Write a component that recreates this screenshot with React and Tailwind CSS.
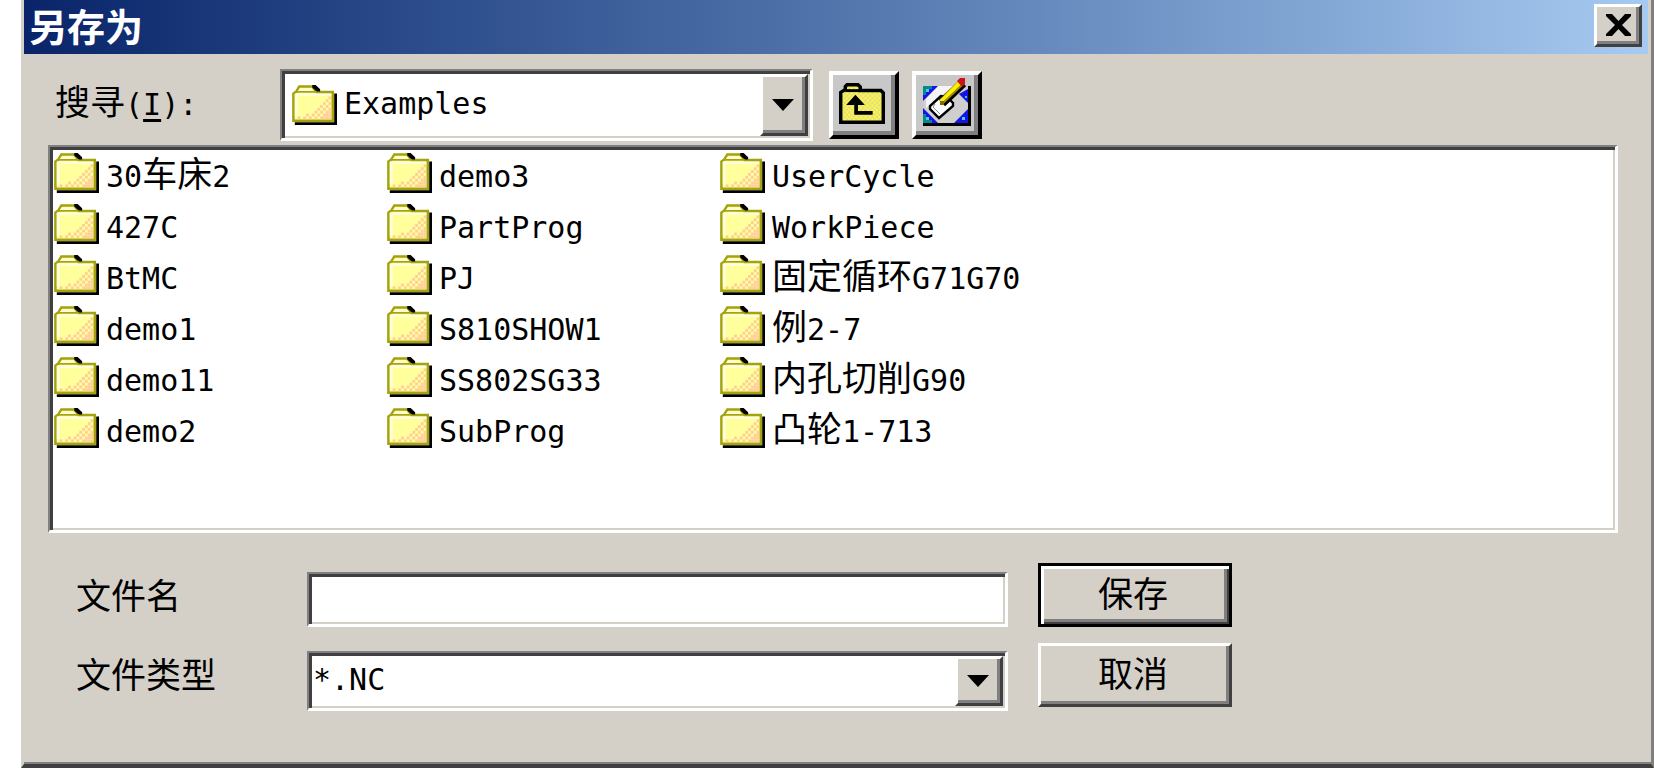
import { useState } from "react";

const folders = [
  "30车床2",
  "427C",
  "BtMC",
  "demo1",
  "demo11",
  "demo2",
  "demo3",
  "PartProg",
  "PJ",
  "S810SHOW1",
  "SS802SG33",
  "SubProg",
  "UserCycle",
  "WorkPiece",
  "固定循环G71G70",
  "例2-7",
  "内孔切削G90",
  "凸轮1-713",
];

const MONO = "font-['DejaVu_Sans_Mono',monospace] text-[30px]";

const SUNKEN =
  "border-t-2 border-l-2 border-r-3 border-b-3 border-t-[#808080] border-l-[#808080] border-r-white border-b-white pt-[3px] pl-[3px] pr-[2px] pb-[2px] shadow-[inset_3px_3px_0_#404040,inset_-2px_-2px_0_#d4d0c8]";

const RAISED =
  "border-3 border-t-white border-l-white border-r-[#404040] border-b-[#404040] shadow-[inset_-3px_-3px_0_#808080]";

const TOOL_BUTTON =
  "mt-[2px] flex h-[68px] w-[70px] items-center justify-center border-4 border-t-white border-r-black border-b-black border-l-white bg-[#c8c8c8] pb-1 shadow-[inset_-4px_-4px_0_#808080]";

// dithered corner of the folder
const dots = [
  [13, 4], [12, 5], [11, 6], [13, 6], [10, 7], [12, 7], [9, 8], [11, 8], [13, 8],
  [8, 9], [10, 9], [12, 9], [5, 10], [7, 10], [9, 10], [11, 10], [12, 10], [13, 10],
  [2, 11], [4, 11], [6, 11], [8, 11], [10, 11], [11, 11], [12, 11], [13, 11], [13, 9],
];

function FolderIcon() {
  return (
    <svg viewBox="0 0 16 14" preserveAspectRatio="none" className="h-[40px] w-[45px] shrink-0" aria-hidden="true">
      <path d="M1 13H15V3H16V14H1Z" fill="#000" />
      <path d="M0.5 12.5V3L1.5 2.3L2.6 0.5H7.2L8.8 2.5H14.5V12.5Z" fill="#ffff9c" stroke="#a3a310" strokeWidth="0.9" />
      <path d="M7.2 0H8.4L10 1.5V2.3H8.8L7.2 0.9Z" fill="#000" />
      <path d="M2.8 1.2H6.8L7.6 2.2H2Z" fill="#fffbd6" />
      <path d="M1 2.4H8.8" stroke="#a3a310" strokeWidth="0.6" />
      <path d="M1 3H14V3.8H2V11H1Z" fill="#fffde0" />
      {dots.map(([x, y]) => (
        <rect key={`${x}-${y}`} x={x} y={y} width="1" height="1" fill="#ffce9c" />
      ))}
    </svg>
  );
}

function UpFolderIcon() {
  return (
    <svg viewBox="0 0 16 14" preserveAspectRatio="none" className="mr-1 h-[41px] w-[46px]" aria-hidden="true">
      <defs>
        <pattern id="upDither" width="1.6" height="1.6" patternUnits="userSpaceOnUse">
          <rect width="1.6" height="1.6" fill="#fff83c" />
          <rect width="0.8" height="0.8" fill="#dedc8c" />
          <rect x="0.8" y="0.8" width="0.8" height="0.8" fill="#dedc8c" />
        </pattern>
      </defs>
      <path
        d="M0.6 13.4V3.2L2.2 2.2V1.2L2.8 0.6H6.6L7.4 1.4V2.6H14.6L15.4 3.4V13.4Z"
        fill="url(#upDither)"
        stroke="#000"
        strokeWidth="1.2"
      />
      <path d="M2.2 2.6H7.4" stroke="#000" />
      <path d="M5.7 4L9 7.5H6.6V9.6H11.7V10.8H5.3V7.5H2.5Z" fill="#000" />
    </svg>
  );
}

function NewFolderIcon() {
  return (
    <svg viewBox="0 0 48 48" className="size-[48px] overflow-visible" aria-hidden="true">
      <rect x="0" y="7" width="45" height="37" fill="#cfcfcf" />
      <path d="M15 7H30L14 20L3 29V20Z" fill="#f4f4f4" />
      <path d="M0 7H15L0 22Z" fill="#1414e6" />
      <path d="M0 7H9V10H6V13H3V16H0Z" fill="#008c8c" />
      <path d="M0 29L15 44H0Z" fill="#1414e6" />
      <path d="M0 35H3V38H6V41H9V44H0Z" fill="#008c8c" />
      <path d="M45 30V44H31Z" fill="#1414e6" />
      <path d="M45 10V24L36 15Z" fill="#1414e6" />
      <g fill="#4cc8d8">
        <rect x="3" y="10" width="3" height="3" />
        <rect x="3" y="38" width="3" height="3" />
        <rect x="39" y="38" width="3" height="3" />
        <rect x="42" y="17" width="2" height="2" />
      </g>
      <path d="M45 7H48V47H0V44H45Z" fill="#000" />
      <path d="M18 17L7 27V30L16 39L30 27V24L24 18Z" fill="#fff" stroke="#000" strokeWidth="2.4" />
      <path d="M12 25L10 28L17 35" fill="none" stroke="#8c8c8c" strokeWidth="1" />
      <path d="M19 24L40 4" stroke="#000" strokeWidth="9" />
      <path d="M18 23L38 3" stroke="#ffee00" strokeWidth="5" />
      <path d="M19 25L40 5" stroke="#9c8c00" strokeWidth="2" />
      <rect x="17" y="22" width="4" height="4" fill="#806c00" />
      <path d="M34 2L37 -1H42V5L39 8Z" fill="#c81414" />
    </svg>
  );
}

function DropArrow() {
  return (
    <span className={`pointer-events-none flex w-[48px] shrink-0 items-center justify-center self-stretch bg-[#d4d0c8] pr-[2px] ${RAISED}`}>
      <svg viewBox="0 0 22 12" className="h-[12px] w-[22px]" aria-hidden="true">
        <path d="M0 0H22L11 12Z" fill="#000" />
      </svg>
    </span>
  );
}

// latin runs are set in the half-width face, the rest in the CJK face
function FolderName({ name }) {
  return (
    <span>
      {name.split(/([\x20-\x7e]+)/).map((part, i) =>
        /^[\x20-\x7e]+$/.test(part) ? (
          <span key={i} className={`${MONO} leading-none`}>
            {part}
          </span>
        ) : (
          part
        )
      )}
    </span>
  );
}

function App() {
  const [fileName, setFileName] = useState("");

  return (
    <div className="flex min-h-screen bg-white pl-[21px] font-['Noto_Sans_CJK_SC',sans-serif] text-[35px] text-black">
      <div className="flex flex-1 flex-col border-r-3 border-b-4 border-l-3 border-r-[#808080] border-b-[#404040] border-l-[#d4d0c8] bg-[#d4d0c8] shadow-[inset_0_-2px_0_#808080]">
        <header className="mr-[3px] flex h-[54px] items-center justify-between bg-linear-to-r from-[#0a246a] to-[#a6caf0] pr-[6px] pb-1 pl-[5px]">
          <h1 className="text-[38px] leading-none font-bold text-white">另存为</h1>
          <button type="button" aria-label="关闭" className={`flex h-[43px] w-[48px] items-center justify-center bg-[#d4d0c8] ${RAISED}`}>
            <svg viewBox="0 0 25 22" className="h-[22px] w-[25px]" aria-hidden="true">
              <path d="M0 0H6L12.500 7L19 0H25V2L16 11L25 20V22H19L12.500 15L6 22H0V20L9 11L0 2Z" fill="#000" />
            </svg>
          </button>
        </header>

        <main className="pt-[15px] pr-[33px] pl-[24px]">
          <div className="flex h-[72px]">
            <label htmlFor="lookIn" className="w-[232px] shrink-0 self-start pl-[7px] leading-[62px]">
              搜寻
              <span className={`${MONO} leading-none`}>
                (<u className="underline-offset-4">I</u>):
              </span>
            </label>
            <div className={`flex w-[533px] items-center bg-white ${SUNKEN}`}>
              <span className="ml-[7px] flex">
                <FolderIcon />
              </span>
              <select id="lookIn" className={`h-full min-w-0 flex-1 appearance-none bg-transparent pb-1 pl-[7px] outline-none ${MONO}`}>
                <option>Examples</option>
              </select>
              <DropArrow />
            </div>
            <button type="button" aria-label="向上一级" className={`ml-4 ${TOOL_BUTTON}`}>
              <UpFolderIcon />
            </button>
            <button type="button" aria-label="新建文件夹" className={`ml-[13px] ${TOOL_BUTTON}`}>
              <NewFolderIcon />
            </button>
          </div>

          <div className={`mt-1 h-[388px] bg-white ${SUNKEN}`}>
            <ul className="grid auto-cols-[333px] grid-flow-col grid-rows-[repeat(6,41px)] gap-y-[10px] pt-[2px] pl-px">
              {folders.map((name) => (
                <li key={name} className="flex items-center gap-[7px] leading-[38px]">
                  <FolderIcon />
                  <FolderName name={name} />
                </li>
              ))}
            </ul>
          </div>

          <form className="mt-[30px] flex items-start pl-[28px]" onSubmit={(e) => e.preventDefault()}>
            <div className="mt-[9px] grid grid-cols-[231px_701px] grid-rows-[55px_60px] gap-y-6">
              <label htmlFor="fileName" className="leading-[44px]">
                文件名
              </label>
              <input
                id="fileName"
                type="text"
                value={fileName}
                onChange={(e) => setFileName(e.target.value)}
                className={`bg-white outline-none ${MONO} ${SUNKEN}`}
              />
              <label htmlFor="fileType" className="leading-[44px]">
                文件类型
              </label>
              <div className={`flex bg-white ${SUNKEN}`}>
                <select id="fileType" className={`min-w-0 flex-1 appearance-none bg-transparent pb-1 pl-px outline-none ${MONO}`}>
                  <option>*.NC</option>
                </select>
                <DropArrow />
              </div>
            </div>
            <div className="ml-[30px] flex w-[194px] flex-col gap-4">
              <button type="submit" className="h-[64px] border-3 border-black pr-1 pb-2 leading-none shadow-[inset_3px_3px_0_#fff,inset_-2px_-2px_0_#404040,inset_-5px_-5px_0_#808080]">
                保存
              </button>
              <button type="button" className={`h-[64px] pr-1 pb-2 leading-none ${RAISED}`}>
                取消
              </button>
            </div>
          </form>
        </main>
      </div>
    </div>
  );
}

export default App;
